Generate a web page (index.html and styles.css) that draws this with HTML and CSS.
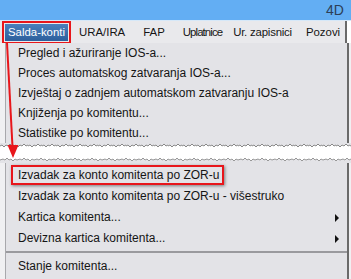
FILE: index.html
```html
<!DOCTYPE html>
<html>
<head>
  <meta charset="utf-8">
  <title>Salda-konti</title>
  <link rel="stylesheet" href="styles.css">
</head>
<body>
  <div class="shot">
    <div class="titlebar"><span class="app">4D</span></div>
    <div class="menubar">
      <span class="menu active">Salda-konti</span>
      <span class="menu">URA/IRA</span>
      <span class="menu">FAP</span>
      <span class="menu narrow">Uplatnice</span>
      <span class="menu tight">Ur. zapisnici</span>
      <span class="menu">Pozovi</span>
    </div>
    <div class="piece">
      <ul class="dropdown dropdown-top">
        <li>Pregled i ažuriranje IOS-a...</li>
        <li>Proces automatskog zatvaranja IOS-a...</li>
        <li>Izvještaj o zadnjem automatskom zatvaranju IOS-a</li>
        <li>Knjiženja po komitentu...</li>
        <li>Statistike po komitentu...</li>
      </ul>
    </div>
    <svg class="tear" width="351" height="5">
      <defs>
        <pattern id="jagDown" width="14" height="5" patternUnits="userSpaceOnUse">
          <path d="M0 0H14V2L12 3 10 1 8 3 6 2 4 4 2 2 0 3Z" fill="#e3e3e7"/>
          <path d="M0 3L2 2 4 4 6 2 8 3 10 1 12 3 14 2" fill="none" stroke="#7c7c7c" stroke-width="0.9"/>
        </pattern>
        <pattern id="jagUp" width="17" height="5" patternUnits="userSpaceOnUse">
          <path d="M0 5H17V2L15 1 13 3 11 1 9 2 7 0 5 2 3 1 0 2Z" fill="#e3e3e7"/>
          <path d="M0 2L3 1 5 2 7 0 9 2 11 1 13 3 15 1 17 2" fill="none" stroke="#8c8c8c" stroke-width="0.9"/>
        </pattern>
      </defs>
      <rect width="351" height="5" fill="url(#jagDown)"/>
    </svg>
    <div class="gap"></div>
    <svg class="tear" width="351" height="5">
      <rect width="351" height="5" fill="url(#jagUp)"/>
    </svg>
    <div class="piece">
      <ul class="dropdown dropdown-bottom">
        <li><span class="mark">Izvadak za konto komitenta po ZOR-u</span></li>
        <li>Izvadak za konto komitenta po ZOR-u - višestruko</li>
        <li class="sub">Kartica komitenta...</li>
        <li class="sub">Devizna kartica komitenta...</li>
        <li class="sep"></li>
        <li>Stanje komitenta...</li>
      </ul>
    </div>
    <svg class="arrow" width="351" height="279">
      <line x1="7" y1="43" x2="12.5" y2="147" stroke="#e8161b" stroke-width="2"/>
      <polygon points="7.5,145 18.5,145 13,158" fill="#e8161b"/>
    </svg>
  </div>
</body>
</html>
```

FILE: styles.css
```css
body {
  margin: 0;
  background-color: #fff;
  font-family: "Liberation Sans", Arial, sans-serif;
  font-size: 12px;
  color: #151515;
}
.shot {
  position: relative;
  width: 351px;
  height: 279px;
  overflow: hidden;
}
.titlebar {
  height: 20px;
  padding-left: 326px;
  background-color: #63aef3;
  border-bottom: 1px solid #d6e8f8;
  font-size: 14px;
  line-height: 21px;
  color: #2d3f57;
  white-space: nowrap;
}
.menubar {
  display: flex;
  align-items: center;
  width: 340px;
  height: 22px;
  padding-left: 5px;
  background-color: #e9e9ec;
  border-right: 2px solid #6a6a6a;
  font-size: 11.4px;
  white-space: nowrap;
  overflow: hidden;
}
.menu {
  flex-shrink: 0;
  margin-right: 8px;
  padding: 2px 3px 3px;
  line-height: 12px;
}
.menu:nth-child(2) {
  margin-right: 12px;
}
.menu:nth-child(3) {
  margin-right: 12px;
}
.menu.narrow {
  margin-right: 5px;
  letter-spacing: -0.9px;
}
.menu.tight {
  letter-spacing: -0.2px;
}
.menu.active {
  background: linear-gradient(#4a7fbd, #2d5f9c);
  color: #fff;
  outline: 2px solid #e8161b;
  outline-offset: 1px;
}
.piece {
  padding-left: 5px;
  background-color: #f0f0f2;
}
.dropdown {
  list-style: none;
  margin: 0;
  padding: 0 0 0 12px;
  width: 329px;
  background-color: #e3e3e7;
  border-left: 1px solid #a8a8ac;
  border-right: 2px solid #6a6a6a;
}
.dropdown li {
  height: 20px;
  line-height: 20px;
  white-space: nowrap;
}
.dropdown-bottom {
  padding-top: 2px;
  padding-bottom: 2px;
  border-bottom: 2px solid #8a8a8a;
}
.dropdown-bottom li {
  height: 21px;
  line-height: 21px;
}
.dropdown .sub {
  position: relative;
}
.dropdown .sub::after {
  content: "";
  position: absolute;
  right: 8px;
  top: 7px;
  border-left: 4px solid #111;
  border-top: 4px solid transparent;
  border-bottom: 4px solid transparent;
}
.dropdown .sep {
  height: 0;
  margin: 2px 0 3px -12px;
  border-top: 2px solid #9a9a9e;
}
.mark {
  display: inline-block;
  height: 16px;
  line-height: 16px;
  margin-left: -7px;
  padding: 0 3px 0 5px;
  border: 2px solid #e8161b;
  box-shadow: 1px 1px 3px rgba(0, 0, 0, 0.45);
}
.tear {
  display: block;
}
.gap {
  height: 10px;
}
.arrow {
  position: absolute;
  top: 0;
  left: 0;
  pointer-events: none;
}
```
